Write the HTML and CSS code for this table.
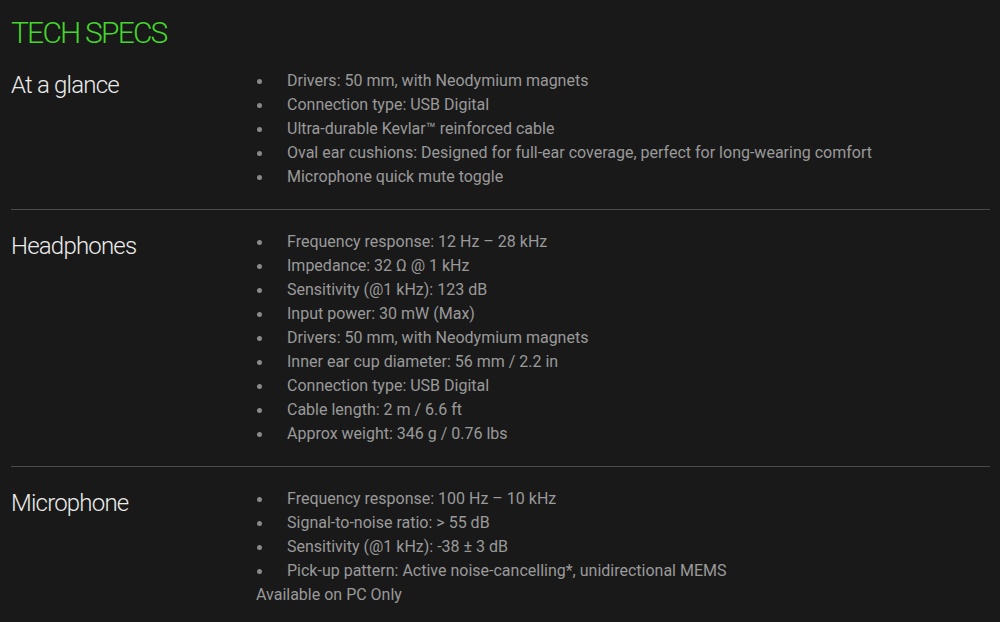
FILE: index.html
```html
<!DOCTYPE html>
<html lang="en">
  <head>
    <meta charset="UTF-8" />
    <meta name="viewport" content="width=device-width, initial-scale=1.0" />
    <title>Tech Specs</title>
    <link rel="stylesheet" href="styles.css">
  </head>
  <body>
    <div class="specs">
      <h1>TECH SPECS</h1>
      <div class="spec-group">
        <h2>At a glance</h2>
        <div class="spec-list">
          <ul>
            <li>Drivers: 50 mm, with Neodymium magnets</li>
            <li>Connection type: USB Digital</li>
            <li>Ultra-durable Kevlar™ reinforced cable</li>
            <li>Oval ear cushions: Designed for full-ear coverage, perfect for long-wearing comfort</li>
            <li>Microphone quick mute toggle</li>
          </ul>
        </div>
      </div>
      <div class="spec-group">
        <h2>Headphones</h2>
        <div class="spec-list">
          <ul>
            <li>Frequency response: 12 Hz – 28 kHz</li>
            <li>Impedance: 32 Ω @ 1 kHz</li>
            <li>Sensitivity (@1 kHz): 123 dB</li>
            <li>Input power: 30 mW (Max)</li>
            <li>Drivers: 50 mm, with Neodymium magnets</li>
            <li>Inner ear cup diameter: 56 mm / 2.2 in</li>
            <li>Connection type: USB Digital</li>
            <li>Cable length: 2 m / 6.6 ft</li>
            <li>Approx weight: 346 g / 0.76 lbs</li>
          </ul>
        </div>
      </div>
      <div class="spec-group last">
        <h2>Microphone</h2>
        <div class="spec-list">
          <ul>
            <li>Frequency response: 100 Hz – 10 kHz</li>
            <li>Signal-to-noise ratio: &gt; 55 dB</li>
            <li>Sensitivity (@1 kHz): -38 ± 3 dB</li>
            <li>Pick-up pattern: Active noise-cancelling*, unidirectional MEMS</li>
          </ul>
          <p>Available on PC Only</p>
        </div>
      </div>
    </div>
  </body>
</html>
```

FILE: styles.css
```css
body {
  margin: 0;
  padding: 0;
  background-color: #191919;
  font-family: Roboto, "Liberation Sans", sans-serif;
}
.specs {
  padding: 17px 10px 0 11px;
}
h1 {
  margin: 0;
  font-size: 30px;
  line-height: 32px;
  font-weight: 300;
  color: #44d62c;
  letter-spacing: -1.8px;
}
.spec-group {
  display: grid;
  grid-template-columns: 245px 1fr;
  padding: 20px 0;
  border-bottom: 1px solid #4a4a4a;
}
.spec-group.last {
  border-bottom: none;
}
h2 {
  margin: 0;
  font-size: 24px;
  line-height: 32px;
  font-weight: 300;
  color: #ececec;
  letter-spacing: -0.8px;
}
.spec-list {
  font-size: 16px;
  line-height: 24px;
  color: #9a9a9a;
}
ul {
  list-style: none;
  margin: 0;
  padding: 0;
}
li {
  position: relative;
  padding-left: 31px;
}
li::before {
  content: "";
  position: absolute;
  left: 1px;
  top: 10px;
  width: 5px;
  height: 5px;
  border-radius: 50%;
  background-color: #8a8a8a;
}
.spec-list p {
  margin: 0;
}
```
